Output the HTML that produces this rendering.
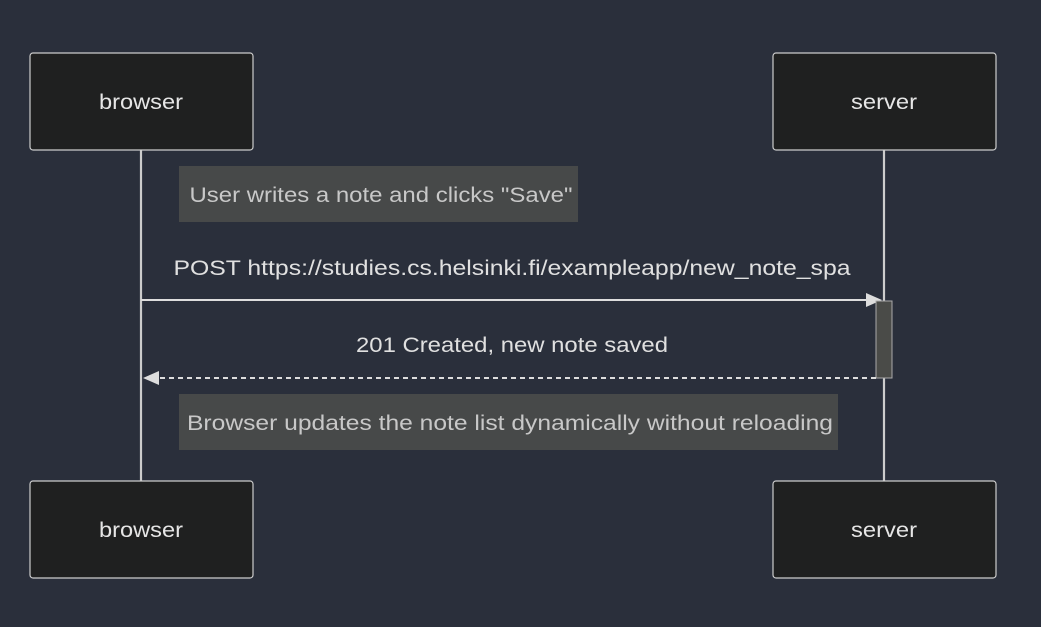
<!DOCTYPE html>
<html><head><style>
html,body{margin:0;padding:0;background:#2a2f3b;}
svg{display:block}
text{font-family:"Liberation Sans","DejaVu Sans",sans-serif;font-size:21px;}
</style></head><body>
<svg width="1041" height="627" viewBox="0 0 1041 627" xmlns="http://www.w3.org/2000/svg">
<rect width="1041" height="627" fill="#2a2f3b"/>
<line x1="141" y1="150" x2="141" y2="481" stroke="#cccccc" stroke-width="2.2"/>
<line x1="884" y1="150" x2="884" y2="481" stroke="#cccccc" stroke-width="2.2"/>
<g fill="#1f2020" stroke="#cccccc" stroke-width="1.2">
<rect x="30" y="53" width="223" height="97" rx="3"/>
<rect x="773" y="53" width="223" height="97" rx="3"/>
<rect x="30" y="481" width="223" height="97" rx="3"/>
<rect x="773" y="481" width="223" height="97" rx="3"/>
</g>
<g fill="#e6e6e6" text-anchor="middle" style="font-size:22px">
<text x="141" y="109" textLength="84" lengthAdjust="spacingAndGlyphs">browser</text>
<text x="884" y="109" textLength="66" lengthAdjust="spacingAndGlyphs">server</text>
<text x="141" y="537" textLength="84" lengthAdjust="spacingAndGlyphs">browser</text>
<text x="884" y="537" textLength="66" lengthAdjust="spacingAndGlyphs">server</text>
</g>
<rect x="179" y="166" width="399" height="56" fill="#474949"/>
<text x="381" y="202" fill="#c8c8c8" text-anchor="middle" textLength="383" lengthAdjust="spacingAndGlyphs">User writes a note and clicks "Save"</text>
<text x="512" y="275" fill="#e0e0e0" text-anchor="middle" textLength="677" lengthAdjust="spacingAndGlyphs">POST https://studies.cs.helsinki.fi/exampleapp/new_note_spa</text>
<line x1="141" y1="300" x2="866" y2="300" stroke="#dddddd" stroke-width="2"/>
<polygon points="866,293 882,300 866,307" fill="#dddddd"/>
<rect x="876" y="301" width="16" height="77" fill="#4a4b48" stroke="#aaaaaa" stroke-width="1"/>
<text x="512" y="352" fill="#e0e0e0" text-anchor="middle" textLength="312" lengthAdjust="spacingAndGlyphs">201 Created, new note saved</text>
<line x1="160" y1="378" x2="876" y2="378" stroke="#dddddd" stroke-width="2" stroke-dasharray="5,4"/>
<polygon points="159,371 143,378 159,385" fill="#dddddd"/>
<rect x="179" y="394" width="659" height="56" fill="#474949"/>
<text x="510" y="430" fill="#c8c8c8" text-anchor="middle" textLength="646" lengthAdjust="spacingAndGlyphs">Browser updates the note list dynamically without reloading</text>
</svg>
</body></html>
